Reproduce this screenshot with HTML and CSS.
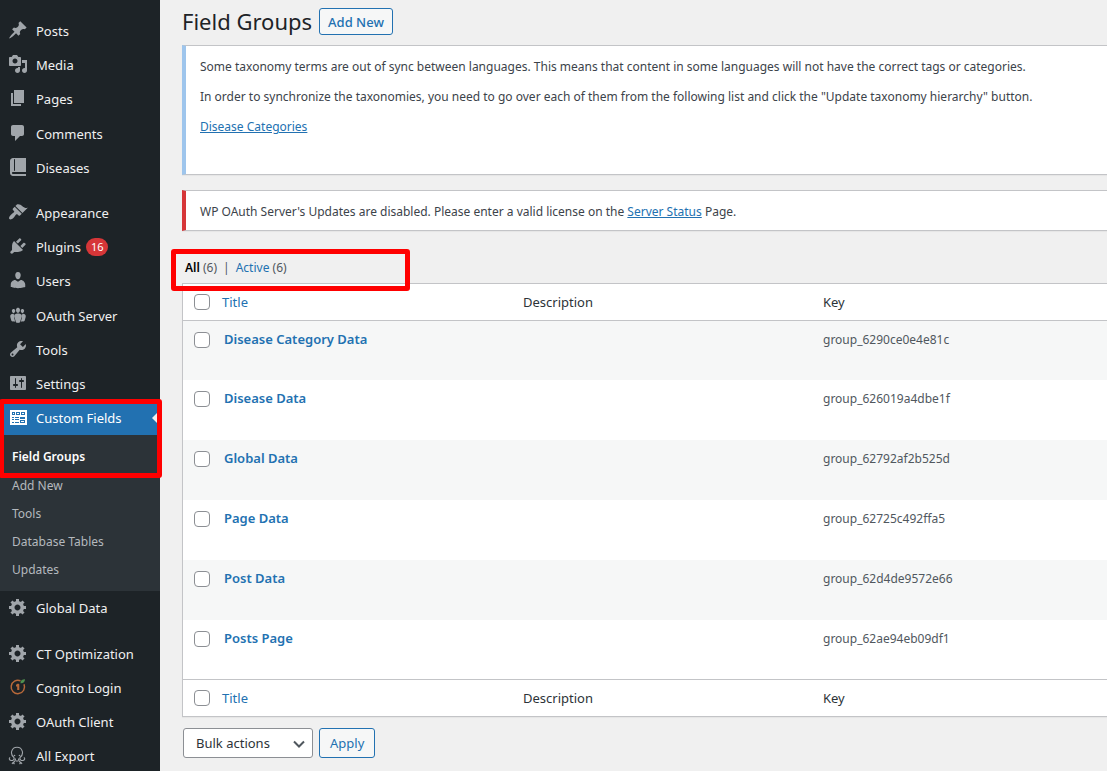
FILE: index.html
```html
<!DOCTYPE html>
<html lang="en">
<head>
<meta charset="utf-8">
<title>Field Groups</title>
<link rel="stylesheet" href="styles.css">
</head>
<body>
<svg class="sprite" aria-hidden="true">
  <symbol id="gear" viewBox="0 0 20 20"><path d="M18 12h-2.18c-.17.7-.44 1.35-.81 1.93l1.54 1.54-2.1 2.1-1.54-1.54c-.58.36-1.23.63-1.91.79V19H8v-2.18c-.68-.16-1.33-.43-1.91-.79l-1.54 1.54-2.12-2.12 1.54-1.54c-.36-.58-.63-1.23-.79-1.91H1V9.03h2.17c.16-.7.44-1.35.8-1.94L2.43 5.55l2.1-2.1 1.54 1.54c.58-.37 1.24-.64 1.93-.81V2h3v2.18c.68.16 1.33.43 1.91.79l1.54-1.54 2.12 2.12-1.54 1.54c.36.59.64 1.24.8 1.94H18V12zm-8.5 1.5c1.66 0 3-1.34 3-3s-1.34-3-3-3-3 1.34-3 3 1.34 3 3 3z"/></symbol>
</svg>
<div class="layout">
  <nav class="sidebar" aria-label="Main menu">
    <ul class="menu">
      <li><a class="menu-link" href="#"><svg class="icon" viewBox="0 0 20 20"><path d="M10.44 3.02l1.82-1.82 6.36 6.35-1.83 1.82c-1.05-.68-2.48-.57-3.41.36l-.75.75c-.92.93-1.04 2.35-.35 3.41l-1.83 1.82-2.41-2.41-2.8 2.79c-.42.42-3.38 2.71-3.8 2.29s1.86-3.39 2.28-3.81l2.79-2.79L4.1 9.36l1.83-1.82c1.05.69 2.48.57 3.4-.36l.75-.75c.93-.92 1.05-2.35.36-3.41z"/></svg>Posts</a></li>
      <li><a class="menu-link" href="#"><svg class="icon" viewBox="0 0 20 20"><path d="M13 11V4c0-.55-.45-1-1-1h-1.67L9 1H5L3.67 3H2c-.55 0-1 .45-1 1v7c0 .55.45 1 1 1h10c.55 0 1-.45 1-1zM7 4.5c1.38 0 2.5 1.12 2.5 2.5S8.38 9.5 7 9.5 4.5 8.38 4.5 7 5.62 4.5 7 4.5zM14 6h5v10.5c0 1.38-1.12 2.5-2.5 2.5S14 17.88 14 16.5s1.12-2.5 2.5-2.5c.17 0 .34.02.5.05V9h-3V6zm-4 8.05V13h2v3.5c0 1.38-1.12 2.5-2.5 2.5S7 17.88 7 16.5 8.12 14 9.5 14c.17 0 .34.02.5.05z"/></svg>Media</a></li>
      <li><a class="menu-link" href="#"><svg class="icon" viewBox="0 0 20 20"><path d="M6 15V2h10v13H6zm-1 1h8v2H3V5h2v11z"/></svg>Pages</a></li>
      <li class="spaced"><a class="menu-link" href="#"><svg class="icon" viewBox="0 0 20 20"><path d="M5 2h9c1.1 0 2 .9 2 2v7c0 1.1-.9 2-2 2h-2l-5 5v-5H5c-1.1 0-2-.9-2-2V4c0-1.1.9-2 2-2z"/></svg>Comments</a></li>
      <li><a class="menu-link" href="#"><svg class="icon" viewBox="0 0 20 20"><path d="M5 17h13v2H5c-1.66 0-3-1.34-3-3V4c0-1.66 1.34-3 3-3h13v14H5c-.55 0-1 .45-1 1s.45 1 1 1zm2-3.5v-11c0-.28-.22-.5-.5-.5s-.5.22-.5.5v11c0 .28.22.5.5.5s.5-.22.5-.5z"/></svg>Diseases</a></li>
      <li class="separator"></li>
      <li><a class="menu-link" href="#"><svg class="icon" viewBox="0 0 20 20"><path d="M14.48 11.06L7.41 3.99l1.5-1.5c.5-.56 2.3-.47 3.51.32 1.21.8 1.43 1.28 2.91 2.1 1.18.64 2.45 1.26 4.45.85zm-.71.71L6.7 4.7 4.93 6.47c-.39.39-.39 1.02 0 1.41l1.06 1.06c.39.39.39 1.03 0 1.42-.6.6-1.43 1.11-2.21 1.69-.35.26-.7.53-1.01.84C1.43 14.23.4 16.08 1.4 17.07c.99 1 2.84-.03 4.18-1.36.31-.31.58-.66.85-1.02.57-.78 1.08-1.61 1.69-2.21.39-.39 1.02-.39 1.41 0l1.06 1.06c.39.39 1.02.39 1.41 0z"/></svg>Appearance</a></li>
      <li><a class="menu-link" href="#"><svg class="icon" viewBox="0 0 20 20"><path d="M13.11 4.36L9.87 7.6 8 5.73l3.24-3.24c.35-.34 1.05-.2 1.56.32.52.51.66 1.21.31 1.55zm-8 1.77l.91-1.12 9.01 9.01-1.19.84c-.71.71-2.63 1.16-3.82 1.16H6.14L4.9 17.26c-.59.59-1.54.59-2.12 0-.59-.58-.59-1.53 0-2.12l1.24-1.24v-3.88c0-1.13.4-3.19 1.09-3.89zm7.26 3.97l3.24-3.24c.34-.35 1.04-.21 1.55.31.52.51.66 1.21.31 1.55l-3.24 3.25z"/></svg>Plugins<span class="count-badge">16</span></a></li>
      <li><a class="menu-link" href="#"><svg class="icon" viewBox="0 0 20 20"><path d="M10 9.25c-2.27 0-2.73-3.44-2.73-3.44C7 4.02 7.82 2 9.97 2c2.16 0 2.98 2.02 2.71 3.81 0 0-.41 3.44-2.68 3.44zm0 2.57L12.72 10c2.39 0 4.52 2.33 4.52 4.53v2.49s-3.65 1.13-7.24 1.13c-3.65 0-7.24-1.13-7.24-1.13v-2.49c0-2.25 1.94-4.48 4.47-4.48z"/></svg>Users</a></li>
      <li class="spaced"><a class="menu-link" href="#"><svg class="icon" viewBox="0 0 20 20"><path d="M8.03 4.46c-.29 1.28.55 3.46 1.97 3.46 1.41 0 2.25-2.18 1.96-3.46-.22-.98-1.08-1.63-1.96-1.63-.89 0-1.74.65-1.97 1.63zm-4.13.9c-.25 1.08.47 2.93 1.67 2.93s1.92-1.85 1.67-2.93c-.19-.83-.92-1.39-1.67-1.39s-1.48.56-1.67 1.39zm8.86 0c-.25 1.08.47 2.93 1.66 2.93 1.2 0 1.92-1.85 1.67-2.93-.19-.83-.92-1.39-1.67-1.39-.74 0-1.47.56-1.66 1.39zm-.59 11.43l1.25-4.3C14.2 10 12.71 8.47 10 8.47c-2.72 0-4.21 1.53-3.44 4.02l1.26 4.3C8.05 17.51 9 18 10 18c.98 0 1.94-.49 2.17-1.21z"/><path d="M6.07 9.16c.49.67.76 1.63.22 3.390l-.1.500 1 3.600c-1.300 0-2.300-.5-2.500-1.100l-1.300-3.400c-.6-1.940.4-3 2.680-2.990z"/><path d="M13.930 9.160c-.49.67-.76 1.630-.22 3.390l.1.500-1 3.600c1.300 0 2.300-.5 2.500-1.100l1.300-3.400c.6-1.940-.4-3-2.680-2.990z"/><path d="M5.500 8.800C3 8.700 1.800 10 2.300 12.100l1 3.300c.2.700 1 1.100 2.200 1.200zM14.500 8.800c2.500-.1 3.700 1.200 3.200 3.300l-1 3.300c-.2.700-1 1.100-2.200 1.200z"/></svg>OAuth Server</a></li>
      <li><a class="menu-link" href="#"><svg class="icon" viewBox="0 0 20 20"><path d="M16.68 9.77c-1.34 1.34-3.3 1.67-4.95.99l-5.41 6.52c-.99.99-2.59.99-3.58 0s-.99-2.59 0-3.57l6.52-5.42c-.68-1.65-.35-3.61.99-4.95 1.28-1.28 3.12-1.62 4.72-1.06l-2.89 2.89 2.82 2.82 2.86-2.87c.53 1.58.18 3.39-1.08 4.65zM3.81 16.21c.4.39 1.04.39 1.43 0 .4-.4.4-1.04 0-1.43-.39-.4-1.03-.4-1.43 0-.39.39-.39 1.03 0 1.43z"/></svg>Tools</a></li>
      <li><a class="menu-link" href="#"><svg class="icon" viewBox="0 0 20 20"><path d="M18 16V4c0-.55-.45-1-1-1H3c-.55 0-1 .45-1 1v12c0 .55.45 1 1 1h14c.55 0 1-.45 1-1zM8 11h1c.55 0 1 .45 1 1s-.45 1-1 1H8v1.500c0 .28-.22.5-.5.5s-.5-.22-.5-.5V13H6c-.55 0-1-.45-1-1s.45-1 1-1h1V5.500c0-.28.22-.5.5-.5s.5.22.5.5V11zm5-2h-1c-.55 0-1-.45-1-1s.45-1 1-1h1V5.500c0-.28.22-.5.5-.5s.5.22.5.5V7h1c.55 0 1 .45 1 1s-.45 1-1 1h-1v5.500c0 .28-.22.5-.5.5s-.5-.22-.5-.5V9z"/></svg>Settings</a></li>
      <li class="current">
        <a class="menu-link menu-link-current" href="#"><svg class="icon" viewBox="0 0 20 20"><path fill-rule="evenodd" d="M2 3h17v15H2zM4 5v3h13V5zM4 10v1h2v-1zm3 0v1h4v-1zm-3 2v1h2v-1zm3 0v1h4v-1zm-3 3v1h2v-1zm3 0v1h4v-1zm5-5v2h5v-2zm0 3v3h5v-3z"/><path d="M7 5h1v3H7zM12 5h1v3h-1zM5 6h1v1H5zM9 6h2v1H9zM14 6h2v1h-2zM13 14h3v1h-3z"/></svg>Custom Fields</a>
        <ul class="submenu">
          <li><a class="submenu-link submenu-link-current" href="#">Field Groups</a></li>
          <li><a class="submenu-link" href="#">Add New</a></li>
          <li><a class="submenu-link" href="#">Tools</a></li>
          <li><a class="submenu-link" href="#">Database Tables</a></li>
          <li><a class="submenu-link" href="#">Updates</a></li>
        </ul>
        <span class="highlight highlight-menu"></span>
      </li>
      <li><a class="menu-link" href="#"><svg class="icon"><use href="#gear"/></svg>Global Data</a></li>
      <li class="separator separator-wide"></li>
      <li><a class="menu-link" href="#"><svg class="icon"><use href="#gear"/></svg>CT Optimization</a></li>
      <li><a class="menu-link" href="#"><svg class="icon" viewBox="0 0 20 20"><path d="M12.500 3.800A6.700 6.700 0 1 0 16 7.300" fill="none" stroke="#b8693a" stroke-width="1.500"/><path d="M9.200 13V9.500H8V7.800L10 6.500l1.300.8V13z" fill="#b8693a"/><path d="M12.500 6.300c-.3-2.600 1.500-3.800 4.500-4-.2 2.500-1.600 4.200-4.500 4z" fill="#4f9150"/></svg>Cognito Login</a></li>
      <li><a class="menu-link" href="#"><svg class="icon"><use href="#gear"/></svg>OAuth Client</a></li>
      <li><a class="menu-link" href="#"><svg class="icon" viewBox="0 0 20 20"><path d="M6 12.500C1.500 9 3.500 2.200 9 2.200s7.500 6.800 3 10.300c-.6 2 1 3.300 3 3 1.800-.2 2.300-2.300.8-3M6 12.500c.6 2-1 3.300-3 3-1.800-.2-2.300-2.300-.8-3M7.500 13.500c0 2-.7 3.500-2.500 4l-1 1.500M5 17.500l1.500 1.500M10.500 13.500c0 2 .7 3.500 2.500 4l1 1.500M13 17.500l-1.500 1.500M9 15v2" fill="none" stroke="currentColor" stroke-width="1.100"/><circle cx="6.500" cy="10.500" r=".8"/><circle cx="11.500" cy="10.500" r=".8"/></svg>All Export</a></li>
    </ul>
  </nav>

  <main class="content">
    <header class="page-head">
      <h1 class="page-title">Field Groups</h1>
      <button class="button button-add" type="button">Add New</button>
    </header>

    <section class="notice notice-info">
      <p>Some taxonomy terms are out of sync between languages. This means that content in some languages will not have the correct tags or categories.</p>
      <p>In order to synchronize the taxonomies, you need to go over each of them from the following list and click the "Update taxonomy hierarchy" button.</p>
      <p><a class="text-link" href="#">Disease Categories</a></p>
    </section>

    <section class="notice notice-error">
      <p>WP OAuth Server's Updates are disabled. Please enter a valid license on the <a class="text-link" href="#">Server Status</a> Page.</p>
    </section>

    <div class="views">
      <a class="view view-current" href="#">All <span class="view-count">(6)</span></a>
      <span>|</span>
      <a class="view" href="#">Active <span class="view-count">(6)</span></a>
      <span class="highlight highlight-views"></span>
    </div>

    <table class="groups">
      <colgroup><col class="col-check"><col class="col-title"><col class="col-description"><col></colgroup>
      <thead>
        <tr><td><input class="check" type="checkbox" aria-label="Select all"></td><th scope="col"><a class="sort-link" href="#">Title</a></th><th scope="col">Description</th><th scope="col">Key</th></tr>
      </thead>
      <tbody>
        <tr><td><input class="check" type="checkbox" aria-label="Select Disease Category Data"></td><td><a class="row-title" href="#">Disease Category Data</a></td><td></td><td class="key">group_6290ce0e4e81c</td></tr>
        <tr><td><input class="check" type="checkbox" aria-label="Select Disease Data"></td><td><a class="row-title" href="#">Disease Data</a></td><td></td><td class="key">group_626019a4dbe1f</td></tr>
        <tr><td><input class="check" type="checkbox" aria-label="Select Global Data"></td><td><a class="row-title" href="#">Global Data</a></td><td></td><td class="key">group_62792af2b525d</td></tr>
        <tr><td><input class="check" type="checkbox" aria-label="Select Page Data"></td><td><a class="row-title" href="#">Page Data</a></td><td></td><td class="key">group_62725c492ffa5</td></tr>
        <tr><td><input class="check" type="checkbox" aria-label="Select Post Data"></td><td><a class="row-title" href="#">Post Data</a></td><td></td><td class="key">group_62d4de9572e66</td></tr>
        <tr><td><input class="check" type="checkbox" aria-label="Select Posts Page"></td><td><a class="row-title" href="#">Posts Page</a></td><td></td><td class="key">group_62ae94eb09df1</td></tr>
      </tbody>
      <tfoot>
        <tr><td><input class="check" type="checkbox" aria-label="Select all"></td><th scope="col"><a class="sort-link" href="#">Title</a></th><th scope="col">Description</th><th scope="col">Key</th></tr>
      </tfoot>
    </table>

    <div class="bulk">
      <div class="select-wrap">
        <select class="select" aria-label="Bulk actions"><option>Bulk actions</option></select>
        <svg class="select-arrow" viewBox="0 0 12 8"><path d="M1 1.500l5 5 5-5" fill="none" stroke="#50575e" stroke-width="2"/></svg>
      </div>
      <button class="button button-apply" type="button">Apply</button>
    </div>
  </main>
</div>
</body>
</html>
```

FILE: styles.css
```css
* {
  box-sizing: border-box;
}

body {
  margin: 0;
  background: #f0f0f0;
  color: #3c434a;
  font-family: "Noto Sans", "Open Sans", sans-serif;
  font-size: 12px;
  line-height: 18px;
}

ul {
  list-style: none;
  margin: 0;
  padding: 0;
}

a {
  color: #2271b1;
  text-decoration: none;
}

.sprite {
  display: none;
}

.layout {
  display: flex;
  height: 100vh;
  overflow: hidden;
}

/* Sidebar */
.sidebar {
  flex: 0 0 160px;
  padding-top: 14px;
  background: #1d2327;
}

.menu-link {
  display: flex;
  align-items: center;
  gap: 8px;
  height: 34px;
  padding-left: 8px;
  color: #f0f0f1;
  font-size: 13px;
}

.spaced {
  padding-top: 1px;
}

.icon {
  flex: none;
  width: 20px;
  height: 20px;
  margin-bottom: 2px;
  color: #a0a5aa;
  fill: currentColor;
}

.separator {
  height: 11px;
}

.separator-wide {
  height: 12px;
}

.count-badge {
  min-width: 22px;
  padding: 0 5px;
  border-radius: 9px;
  background: #d63638;
  color: #fff;
  font-size: 11px;
  line-height: 18px;
  text-align: center;
  margin-left: -3px;
}

.current {
  position: relative;
  z-index: 1;
}

.menu-link-current {
  position: relative;
  background: #2271b1;
  color: #fff;
}

.menu-link-current .icon {
  color: #fff;
}

.menu-link-current::after {
  content: "";
  position: absolute;
  right: 0;
  top: 9px;
  border: 8px solid transparent;
  border-left: 0;
  border-right-color: #f0f0f1;
}

.submenu {
  padding: 8px 0 7px;
  background: #2c3338;
}

.submenu-link {
  display: block;
  padding: 5px 12px;
  color: #b4b9be;
}

.submenu-link-current {
  padding-bottom: 6px;
  color: #fff;
  font-weight: 600;
}

/* Red marker frames */
.highlight {
  position: absolute;
  border: 5px solid #f00;
  border-radius: 3px;
  pointer-events: none;
}

.highlight-menu {
  top: -2px;
  left: -1px;
  width: 163px;
  height: 79px;
}

.highlight-views {
  top: -10px;
  left: -11px;
  width: 239px;
  height: 42px;
}

/* Content */
.content {
  flex: 1;
  min-width: 0;
  padding: 8px 0 0 22px;
}

.page-head {
  display: flex;
  align-items: center;
  gap: 7px;
  margin-bottom: 10px;
}

.page-title {
  margin: 0;
  color: #1d2327;
  font-size: 22px;
  font-weight: 400;
  line-height: 27px;
}

.button {
  border: 1px solid #2271b1;
  border-radius: 3px;
  background: #f6f7f7;
  color: #2271b1;
  font-family: inherit;
  font-size: 13px;
}

.button-add {
  height: 27px;
  padding: 0 8px;
  font-weight: 500;
}

.notice {
  border: 1px solid #c3c4c7;
  border-left: 4px solid;
  border-right: 0;
  background: #fff;
  box-shadow: 0 1px 1px rgba(0, 0, 0, 0.04);
  padding-left: 14px;
  white-space: nowrap;
  overflow: hidden;
}

.notice p {
  margin: 0 0 12px;
}

.notice-info {
  border-left-color: #9ec5ec;
  padding-top: 12px;
  padding-bottom: 26px;
  margin-bottom: 15px;
}

.notice-error {
  border-left-color: #d63638;
  padding-top: 12px;
  margin-bottom: 28px;
}

.notice-error p {
  margin-bottom: 9px;
}

.text-link {
  text-decoration: underline;
}

.views {
  position: relative;
  display: flex;
  gap: 6px;
  margin-bottom: 6px;
  padding-left: 3px;
  color: #50575e;
}

.view-count {
  color: #50575e;
  font-weight: 400;
}

.view-current {
  color: #000;
  font-weight: 600;
}

.groups {
  width: 100%;
  table-layout: fixed;
  border-collapse: separate;
  border-spacing: 0;
  border: 1px solid #c3c4c7;
  border-right: 0;
  background: #fff;
  box-shadow: 0 1px 1px rgba(0, 0, 0, 0.04);
}

.col-check {
  width: 31px;
}

.col-title {
  width: 299px;
}

.col-description {
  width: 300px;
}

.groups th,
.groups td {
  padding: 0 10px;
  text-align: left;
}

.groups td:first-child {
  padding: 0 0 0 11px;
}

.groups thead tr,
.groups tfoot tr {
  height: 37px;
}

.groups th {
  padding-left: 8px;
  color: #2c3338;
  font-size: 13px;
  font-weight: 400;
}

.groups th + th {
  padding-left: 10px;
}

.groups thead td,
.groups thead th {
  border-bottom: 1px solid #c3c4c7;
}

.groups tfoot td,
.groups tfoot th {
  border-top: 1px solid #c3c4c7;
}

.groups tbody tr {
  height: 60px;
}

.groups tbody tr:first-child,
.groups tbody tr:last-child {
  height: 59px;
}

.groups tbody td {
  padding-top: 9px;
  color: #50575e;
  vertical-align: top;
}

.groups tbody td:first-child {
  padding-top: 11px;
}

.groups tbody .key {
  padding-top: 10px;
}

.groups tbody tr:nth-child(odd) {
  background: #f6f7f7;
}

.row-title {
  font-size: 13px;
  font-weight: 600;
}

.check {
  appearance: none;
  display: block;
  width: 16px;
  height: 16px;
  margin: 0;
  border: 1px solid #8c8f94;
  border-radius: 4px;
  background: #fff;
}

.bulk {
  display: flex;
  gap: 6px;
  padding: 11px 0 0 1px;
}

.select-wrap {
  position: relative;
}

.select {
  appearance: none;
  width: 130px;
  height: 30px;
  padding: 0 24px 0 12px;
  border: 1px solid #8c8f94;
  border-radius: 3px;
  background: #fff;
  color: #2c3338;
  font-family: inherit;
  font-size: 13px;
}

.select-arrow {
  position: absolute;
  right: 8px;
  top: 12px;
  width: 12px;
  height: 8px;
  pointer-events: none;
}

.button-apply {
  height: 30px;
  padding: 0 10px;
}
```
